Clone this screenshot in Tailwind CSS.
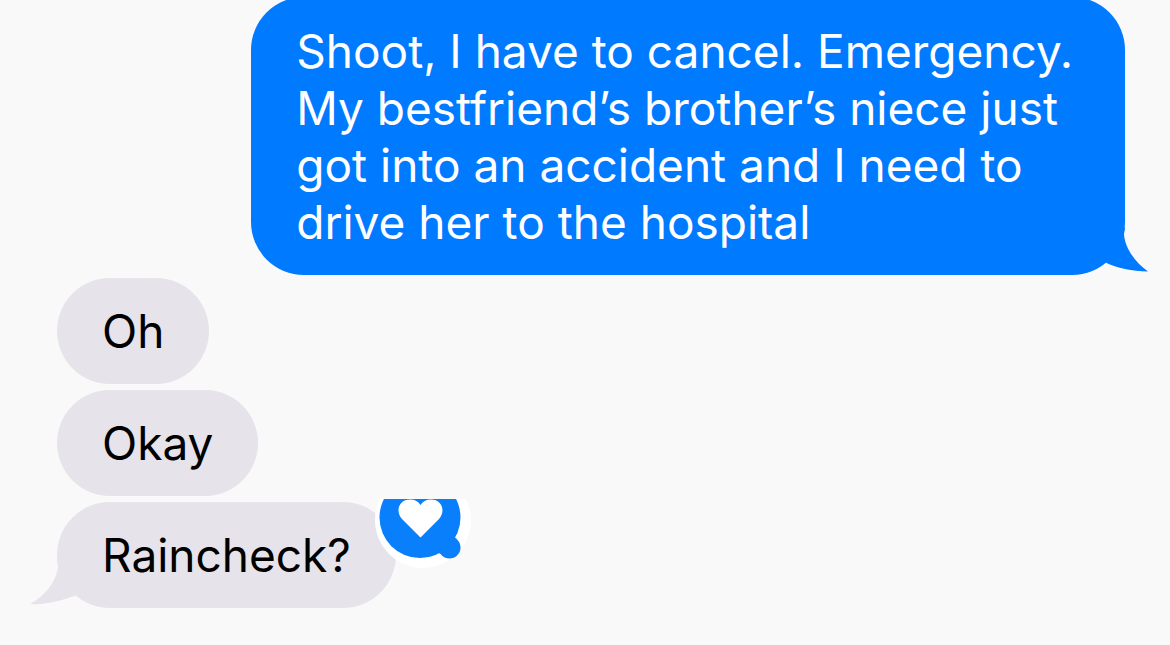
<!DOCTYPE html>
<html lang="en">
<head>
<meta charset="utf-8">
<meta name="viewport" content="width=device-width, initial-scale=1">
<title>Messages</title>
<script src="https://cdn.jsdelivr.net/npm/@tailwindcss/browser@4"></script>
</head>
<body class="bg-[#f9f9f9] font-['Inter',sans-serif] text-[46px] leading-[57px] text-black">
<main class="flow-root min-h-screen overflow-hidden">
  <ol class="-mt-[3px] flex flex-col gap-1.5 pr-[45px] pl-[57px]">
    <li class="relative -mb-[3px] self-end rounded-[53px] bg-[#007aff] pt-[26px] pr-[52px] pb-6 pl-[45px] text-white">
      <p>Shoot, I have to cancel. Emergency.<br>My bestfriend’s brother’s niece just<br>got into an accident and I need to<br>drive her to the hospital</p>
      <svg class="absolute -right-[23px] bottom-[3px] h-[44px] w-[48px]" viewBox="1100 228 48 44" fill="#007aff" aria-hidden="true"><path d="M1100 228H1125L1124 234C1125 249 1136 263 1148 271.500C1132 271.500 1117 268 1105.500 262.500L1100 258Z"/></svg>
    </li>
    <li class="self-start rounded-[53px] bg-[#e6e3ea] px-[45px] pt-[25px] pb-6"><p>Oh</p></li>
    <li class="self-start rounded-[53px] bg-[#e6e3ea] px-[45px] pt-[25px] pb-6"><p>Okay</p></li>
    <li class="relative self-start rounded-[53px] bg-[#e6e3ea] px-[45px] pt-[25px] pb-6">
      <svg class="absolute -left-[27px] bottom-[3px] h-[45px] w-[55px]" viewBox="30 560 55 45" fill="#e6e3ea" aria-hidden="true"><path d="M57 560L58 567C56 582 45 596 30 604C47 605 63 600 77 595L85 585V560Z"/></svg>
      <p>Raincheck?</p>
      <svg class="absolute -top-[3px] -right-[75px] h-[70px] w-[96px]" viewBox="375 499 96 70" role="img" aria-label="Loved">
        <circle cx="423" cy="520" r="48" fill="#fff"/>
        <circle cx="420" cy="517.500" r="40.500" fill="#0a7ffb"/>
        <circle cx="449.500" cy="547.500" r="11" fill="#0a7ffb"/>
        <path d="M438 553Q441 553 443 556L458 541Q455 539 455 537Z" fill="#0a7ffb"/>
        <path d="M420.500 537.500L402 519C395 511 399 499.500 410 499.500C415 499.500 418.500 501.500 420.500 505C422.500 501.500 426 499.500 431 499.500C442 499.500 446 511 439 519Z" fill="#fff"/>
      </svg>
    </li>
  </ol>
</main>
</body>
</html>
